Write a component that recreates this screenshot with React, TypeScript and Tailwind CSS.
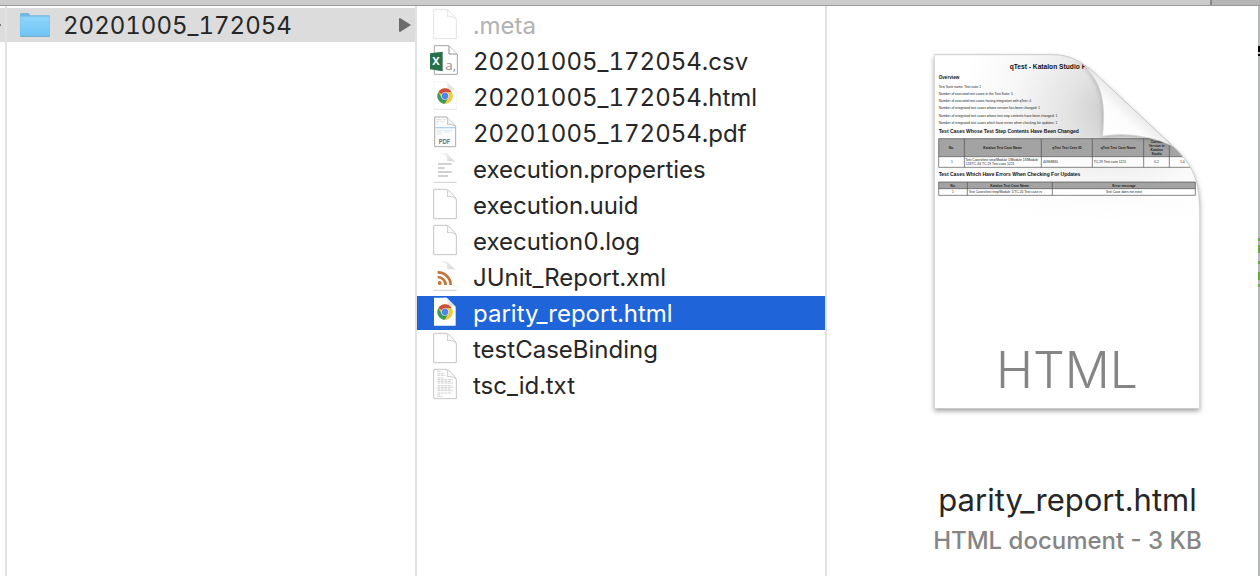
import React, { useState } from "react";

type Kind = "ghost" | "excel" | "chrome" | "pdf" | "props" | "blank" | "rss" | "text";

const files: { name: string; kind: Kind; dim?: boolean }[] = [
  { name: ".meta", kind: "ghost", dim: true },
  { name: "20201005_172054.csv", kind: "excel" },
  { name: "20201005_172054.html", kind: "chrome" },
  { name: "20201005_172054.pdf", kind: "pdf" },
  { name: "execution.properties", kind: "props" },
  { name: "execution.uuid", kind: "blank" },
  { name: "execution0.log", kind: "blank" },
  { name: "JUnit_Report.xml", kind: "rss" },
  { name: "parity_report.html", kind: "chrome" },
  { name: "testCaseBinding", kind: "blank" },
  { name: "tsc_id.txt", kind: "text" },
];

function Sheet({ stroke = "#c4c4c4", width = 3 }: { stroke?: string; width?: number }) {
  return (
    <g fill="#fff" stroke={stroke} strokeWidth={width} strokeLinejoin="round">
      <path d="M11 4H50C56 6 75 24 79 34V92H11Z" />
      <path d="M51 5C54 12 53 19 52 26C61 24 70 26 78 33" fill="#fafafa" strokeWidth={width - 0.5} />
    </g>
  );
}

// A sheet whose sides fade out, with a soft folded corner.
function SoftSheet() {
  return (
    <g>
      <path d="M12 4H50L78 32V91H12Z" fill="#fff" />
      <path d="M12 3H50L77 31L66 27L52 28L50 12L36 6Z" fill="url(#softFold)" />
      <path d="M11 91H80" stroke="#cfcfcf" strokeWidth="3" />
    </g>
  );
}

function ChromeMark() {
  return (
    <g transform="translate(45 48)">
      <circle r="23" fill="#f3c944" />
      <path d="M0 0L-19.9 -11.5A23 23 0 0 1 19.9 -11.5L20 -11H0Z" fill="#cf4c40" />
      <path d="M-19.9 -11.5A23 23 0 0 0 0 23L10 6L0 0L-9.5 5.5Z" fill="#3a9a62" />
      <path d="M0 23L10 5.5L8 -11H20A23 23 0 0 1 0 23Z" fill="#f3c944" />
      <circle r="11.5" fill="#dfe6ee" />
      <circle r="9.5" fill="#4c86e8" />
    </g>
  );
}

function FileIcon({ kind, selected }: { kind: Kind; selected: boolean }) {
  return (
    <svg viewBox="0 0 90 102" className="h-[34px] w-[30px] shrink-0 overflow-visible" aria-hidden="true">
      {kind === "ghost" && <Sheet stroke="#e3e3e3" />}
      {kind === "blank" && <Sheet />}
      {kind === "excel" && (
        <g>
          <path d="M13 5H57L82 31V91H13Z" fill="#fff" stroke="#a5a5a5" strokeWidth="3" />
          <path d="M57 6V30H81" fill="#fff" stroke="#8f8f8f" strokeWidth="3" />
          <text x="46" y="79" fontSize="40" className="font-['Open_Sans']" fill="#929292">a,</text>
          <path d="M0 28L38 23V82L0 76Z" fill="#28704a" />
          <text x="7" y="64" fontSize="33" fontWeight="700" className="font-['Open_Sans']" fill="#fff">X</text>
        </g>
      )}
      {kind === "chrome" && (
        <g>
          {selected ? (
            <path d="M12 5H50L77 32V89H12Z" fill="#fff" />
          ) : (
            <g>
              <path d="M12 5H50L79 34V88H12Z" fill="#fff" stroke="#eeeeee" strokeWidth="2" />
              <path d="M11 88H80" stroke="#dedede" strokeWidth="2" />
            </g>
          )}
          <path d="M40 5H50L77 32L66 28L54 30L51 13Z" fill="url(#softFold)" />
          <ChromeMark />
        </g>
      )}
      {kind === "pdf" && (
        <g>
          <path d="M14 3H50L77 31V92H14Z" fill="#fcfcfc" stroke="#aaa" strokeWidth="3" strokeLinejoin="round" />
          <path d="M19 11H35M39 11H46M19 17H27M32 17H40M19 24H24" stroke="#c3c9cf" strokeWidth="2" />
          <path d="M16 35H75" stroke="#a9d3f3" strokeWidth="4" />
          <path d="M19 43H69M19 48H36M41 48H60M19 54H34" stroke="#d6e0e9" strokeWidth="2" />
          <path d="M51 4C54 12 53 18 52 25C61 24 69 26 76 31" fill="#f5f5f5" stroke="#b5b5b5" strokeWidth="2.5" />
          <text x="26" y="84" fontSize="18" fontWeight="600" fill="#666">PDF</text>
        </g>
      )}
      {kind === "props" && (
        <g>
          <SoftSheet />
          <path d="M24 36H65M24 48H44M24 60H65M24 72H54" stroke="#c2c2c2" strokeWidth="4" />
        </g>
      )}
      {kind === "rss" && (
        <g>
          <SoftSheet />
          <circle cx="29" cy="69" r="6" fill="#c67338" />
          <path d="M23 51A24 24 0 0 1 47 75M23 37A38 38 0 0 1 62 75" fill="none" stroke="#c67338" strokeWidth="8" />
        </g>
      )}
      {kind === "text" && (
        <g>
          <Sheet />
          <path
            d="M22 10H34M22 17H42M22 22H46M22 30H40M22 35H68M22 40H64M22 45H69M22 53H67M22 58H70M22 63H62M22 68H69M22 75H64M22 80H32M22 85H38"
            stroke="#c8c8c8"
            strokeWidth="2.5"
            strokeDasharray="9 1.5"
          />
        </g>
      )}
    </svg>
  );
}

function FolderIcon() {
  return (
    <svg viewBox="0 0 96 84" className="h-7 w-8 shrink-0" aria-hidden="true">
      <path d="M3 12Q3 6 7 6H26Q29 6 31 9L34 13H89Q93 13 93 17V76H3Z" fill="#6fb9e4" />
      <path d="M4 17H92V20H4Z" fill="#9bdcff" />
      <path d="M4 21H92V72Q92 75 89 75H7Q4 75 4 72Z" fill="url(#folder)" />
      <path d="M4 76H92" stroke="#69a9cf" strokeWidth="3" />
    </svg>
  );
}

// Thumbnail of the report page with its corner curled over.
function Preview() {
  return (
    <svg
      viewBox="0 0 855 1140"
      className="h-[380px] w-[285px] overflow-visible font-['Liberation_Sans',sans-serif]"
      role="img"
      aria-label="Preview of parity_report.html"
    >
      <defs>
        <clipPath id="page">
          <path d="M29 29H380C435 29 470 50 510 85L742 302C795 350 823 400 823 480V1089H29Z" />
        </clipPath>
        <radialGradient id="shade" gradientUnits="userSpaceOnUse" cx="560" cy="200" r="460">
          <stop offset="0" stopColor="#cccccc" />
          <stop offset="0.3" stopColor="#e4e4e4" />
          <stop offset="0.65" stopColor="#f7f7f7" />
          <stop offset="1" stopColor="#fff" />
        </radialGradient>
        <linearGradient id="fade" x2="0" y2="1">
          <stop offset="0" stopColor="#fff" stopOpacity="0" />
          <stop offset="1" stopColor="#fff" />
        </linearGradient>
        <linearGradient id="curl" gradientUnits="userSpaceOnUse" x1="535" y1="273" x2="635" y2="165">
          <stop offset="0" stopColor="#fff" />
          <stop offset="0.55" stopColor="#fcfcfc" />
          <stop offset="0.85" stopColor="#e9e9e9" />
          <stop offset="1" stopColor="#dcdcdc" />
        </linearGradient>
        <filter id="drop" x="-10%" y="-10%" width="120%" height="120%">
          <feDropShadow dx="0" dy="8" stdDeviation="8" floodColor="#000" floodOpacity="0.38" />
        </filter>
        <filter id="curlShadow" x="-20%" y="-20%" width="140%" height="140%">
          <feDropShadow dx="-1" dy="4" stdDeviation="6" floodColor="#000" floodOpacity="0.22" />
        </filter>
      </defs>
      <path
        d="M29 29H380C435 29 470 50 510 85L742 302C795 350 823 400 823 480V1089H29Z"
        fill="#fff"
        stroke="#c2c2c2"
        strokeWidth="2"
        filter="url(#drop)"
      />
      <g clipPath="url(#page)">
        <rect x="29" y="29" width="794" height="1060" fill="url(#shade)" />
        <rect x="29" y="270" width="794" height="270" fill="url(#fade)" />
        <rect x="29" y="539" width="794" height="550" fill="#fff" />
        <g fill="#111">
          <text x="254" y="71" fontSize="20" fontWeight="700">qTest - Katalon Studio Parity</text>
          <g fontSize="15" fontWeight="700">
            <text x="41" y="103" fontSize="14">Overview</text>
            <text x="41" y="264">Test Cases Whose Test Step Contents Have Been Changed</text>
            <text x="41" y="394">Test Cases Which Have Errors When Checking For Updates</text>
          </g>
          <g fontSize="10" fill="#222">
            <text x="41" y="128">Test Suite name: Test suite 1</text>
            <text x="41" y="150">Number of executed test cases in the Test Suite: 5</text>
            <text x="41" y="172">Number of executed test cases having integration with qTest: 4</text>
            <text x="41" y="193">Number of integrated test cases whose version has been changed: 1</text>
            <text x="41" y="215">Number of integrated test cases whose test step contents have been changed: 1</text>
            <text x="41" y="237">Number of integrated test cases which have errors when checking for updates: 1</text>
          </g>
        </g>
        <path d="M41 281H811V335H41Z" fill="#a3a3a3" />
        <path d="M41 335H811V367H41ZM41 431H811V451H41Z" fill="#fff" fillOpacity="0.75" />
        <path d="M41 411H811V431H41Z" fill="#a3a3a3" />
        <path
          d="M41 281H811V367H41ZM41 335H811M118 281V367M349 281V367M502 281V367M656 281V367M733 281V367M41 411H811V451H41ZM41 431H811M127 411V451M382 411V451"
          fill="none"
          stroke="#4d4d4d"
          strokeWidth="2"
        />
        <g fontSize="10" fontWeight="700" fill="#222" textAnchor="middle">
          <text x="79" y="312">No.</text>
          <text x="233" y="312">Katalon Test Case Name</text>
          <text x="426" y="312">qTest Test Case ID</text>
          <text x="580" y="312">qTest Test Case Name</text>
          <text x="695" y="295">Current</text>
          <text x="695" y="307">Version in</text>
          <text x="695" y="318">Katalon</text>
          <text x="695" y="330">Studio</text>
          <text x="84" y="425">No.</text>
          <text x="254" y="425">Katalon Test Case Name</text>
          <text x="597" y="425">Error message</text>
        </g>
        <g fontSize="10" fill="#222">
          <text x="78" y="355">1</text>
          <text x="121" y="349">Test Cases/test step/Module 1/Module 13/Module</text>
          <text x="121" y="361">123/TC-34 TC-29 Test case 1221</text>
          <text x="354" y="355">44968830</text>
          <text x="506" y="355">TC-29 Test case 1221</text>
          <text x="688" y="355">0.2</text>
          <text x="765" y="355">1.0</text>
          <text x="81" y="444">1</text>
          <text x="131" y="444">Test Cases/test step/Module 1/TC-20 Test case rs</text>
          <text x="542" y="444">Test Case does not exist</text>
        </g>
        <path
          d="M450 40C482 62 505 90 518 118C535 155 540 200 533 273C600 261 680 272 744 304L510 85C490 65 470 50 450 40Z"
          fill="url(#curl)"
          stroke="#c6c6c6"
          strokeWidth="1"
          filter="url(#curlShadow)"
        />
      </g>
      <path
        d="M29 29H380C435 29 470 50 510 85L742 302C795 350 823 400 823 480"
        fill="none"
        stroke="#cfcfcf"
        strokeWidth="3"
      />
      <text x="426" y="1028" fontSize="150" fontWeight="350" textAnchor="middle" fill="#858585" className="font-['Inter',sans-serif]">
        HTML
      </text>
    </svg>
  );
}

export default function App() {
  const [selected, setSelected] = useState("parity_report.html");
  return (
    <div className="flex min-h-screen flex-col overflow-hidden bg-white font-['Inter','Liberation_Sans',sans-serif] text-[#262626]">
      <svg className="absolute h-0 w-0" aria-hidden="true">
        <defs>
          <linearGradient id="folder" x2="0" y2="1">
            <stop offset="0" stopColor="#8bd3fb" />
            <stop offset="1" stopColor="#70c5f4" />
          </linearGradient>
          <linearGradient id="softFold" x1="0" y1="0" x2="1" y2="1">
            <stop offset="0" stopColor="#fff" />
            <stop offset="0.5" stopColor="#e6e6e6" />
            <stop offset="1" stopColor="#d2d2d2" />
          </linearGradient>
        </defs>
      </svg>
      <header className="flex h-1.5 border-b border-[#999] bg-[#cccccc]">
        <div className="flex-1" />
        <div className="w-[50px] border-l-2 border-[#888] bg-[#b5b5b5]" />
      </header>
      <main className="grid flex-1 grid-cols-[5px_410fr_410fr_433fr_2px]">
        <div className="pt-0.5">
          <div className="flex h-[34px] items-center bg-[#dcdcdc]">
            <div className="h-0.5 w-px bg-[#777]" />
          </div>
        </div>
        <nav className="min-w-0 border-l-2 border-[#e2e2e2] pt-0.5" aria-label="Folders">
          <button className="flex h-[34px] w-full items-center bg-[#dcdcdc] pl-3 text-left text-2xl leading-8 tabular-nums">
            <FolderIcon />
            <span className="min-w-0 flex-1 truncate pt-0.5 pl-3">20201005_172054</span>
            <svg viewBox="0 0 12 14" className="mr-1 h-3.5 w-3 shrink-0" aria-hidden="true">
              <path d="M0 1Q0 0 1 0L12 7L1 14Q0 14 0 13Z" fill="#6b6b6b" />
            </svg>
          </button>
        </nav>
        <section className="min-w-0 border-l-2 border-[#e2e2e2] pt-0.5" aria-label="Files">
          <ul className="flex flex-col gap-0.5">
            {files.map((f) => {
              const on = f.name === selected;
              return (
                <li key={f.name}>
                  <button
                    onClick={() => setSelected(f.name)}
                    aria-pressed={on}
                    className={`flex h-[34px] w-full items-center gap-[13px] pl-[13px] text-left text-2xl leading-8 tabular-nums ${
                      on ? "bg-[#2064d9] text-white" : f.dim ? "text-[#b2b2b2]" : ""
                    }`}
                  >
                    <FileIcon kind={f.kind} selected={on} />
                    <span className="truncate pt-0.5">{f.name}</span>
                  </button>
                </li>
              );
            })}
          </ul>
        </section>
        <section className="flex min-w-0 flex-col items-center border-l-2 border-[#e2e2e2] pt-[39px] pl-[50px]" aria-label="Preview">
          <Preview />
          <h1 className="mt-[55px] text-[31px] leading-10">parity_report.html</h1>
          <p className="text-2xl leading-[42px] font-medium text-[#858585]">HTML document - 3 KB</p>
        </section>
        <div className="flex flex-col bg-[#b4b8ba]" aria-hidden="true">
          <div className="mt-10 h-1.5 bg-black" />
          <div className="mt-0.5 h-0.5 bg-black" />
          <div className="mt-[182px] h-[3px] bg-[#5fae35]" />
          <div className="mt-1 h-2 bg-[#5fae35]" />
          <div className="mt-2 h-[3px] bg-[#5fae35]" />
          <div className="mt-2 h-2 bg-[#5fae35]" />
          <div className="mt-1 h-[3px] bg-[#5fae35]" />
        </div>
      </main>
    </div>
  );
}
